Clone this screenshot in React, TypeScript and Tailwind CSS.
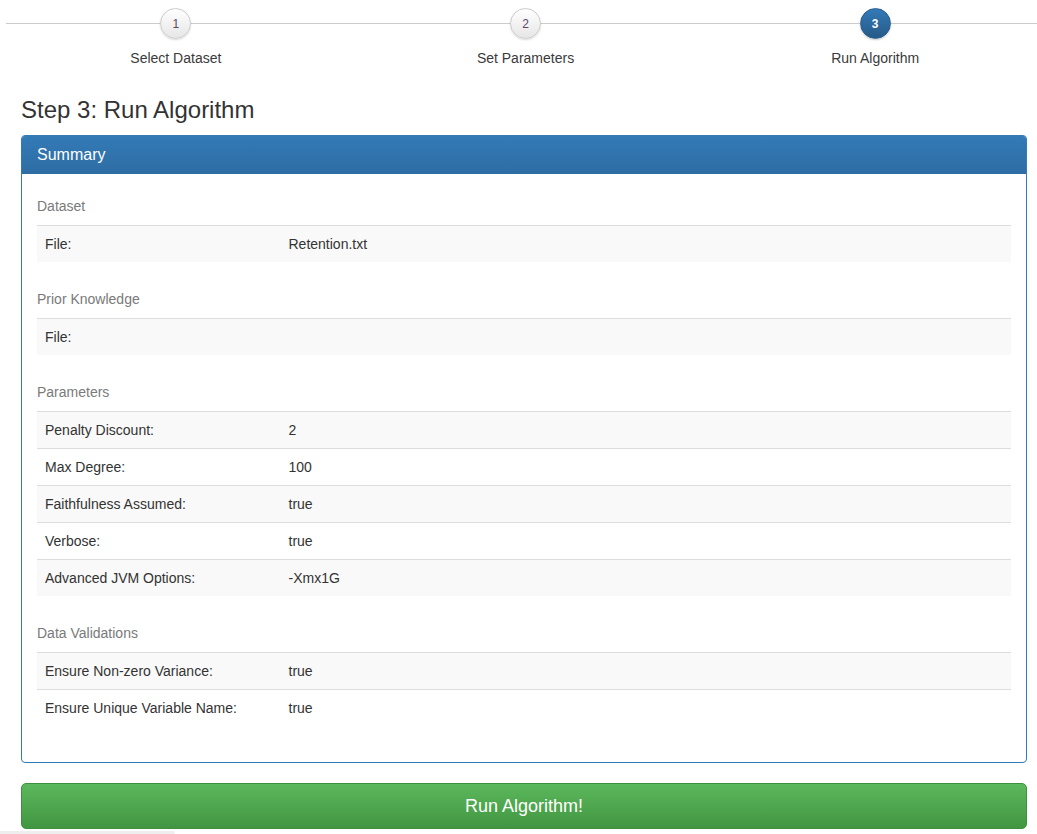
type Row = { label: string; value: string };

const sections: { title: string; rows: Row[] }[] = [
  { title: "Dataset", rows: [{ label: "File:", value: "Retention.txt" }] },
  { title: "Prior Knowledge", rows: [{ label: "File:", value: "" }] },
  {
    title: "Parameters",
    rows: [
      { label: "Penalty Discount:", value: "2" },
      { label: "Max Degree:", value: "100" },
      { label: "Faithfulness Assumed:", value: "true" },
      { label: "Verbose:", value: "true" },
      { label: "Advanced JVM Options:", value: "-Xmx1G" },
    ],
  },
  {
    title: "Data Validations",
    rows: [
      { label: "Ensure Non-zero Variance:", value: "true" },
      { label: "Ensure Unique Variable Name:", value: "true" },
    ],
  },
];

const steps = ["Select Dataset", "Set Parameters", "Run Algorithm"];

function Stepper() {
  return (
    <div className="relative h-[77px] overflow-hidden">
      <div className="absolute left-[6px] right-0 top-[23px] border-t border-[#cccccc]" />
      <div className="relative flex w-[1050px] pl-px">
        {steps.map((s, i) => {
          const active = i === 2;
          return (
            <div key={s} className="flex w-[350px] flex-col items-center pt-[8px]">
              {active ? (
                <div className="flex h-[31px] w-[31px] items-center justify-center rounded-full border border-[#285e8e] bg-gradient-to-b from-[#337ab7] to-[#265a88] text-[12px] font-bold text-white shadow-[0_1px_2px_rgba(0,0,0,0.2)]">
                  {i + 1}
                </div>
              ) : (
                <div className="flex h-[31px] w-[31px] items-center justify-center rounded-full border border-[#cccccc] bg-gradient-to-b from-white to-[#e6e6e6] text-[12px] text-[#5a4a66] shadow-[0_1px_2px_rgba(0,0,0,0.15)]">
                  {i + 1}
                </div>
              )}
              <div className="mt-[9px] text-[14px] leading-5 text-[#3a3a3a]">{s}</div>
            </div>
          );
        })}
      </div>
    </div>
  );
}

export default function App() {
  return (
    <div className="min-h-screen bg-white font-['Liberation_Sans',Arial,sans-serif] text-[#333]">
      <Stepper />

      <div className="px-[21px] pr-[10px]">
        <h1 className="mt-[20px] text-[24px] leading-[26px]">Step 3: Run Algorithm</h1>

        <div className="mt-[12px] overflow-hidden rounded-[4px] border border-[#337ab7]">
          <div className="bg-gradient-to-b from-[#337ab7] to-[#2e6da4] px-[15px] py-[10px] text-[16px] leading-[18px] text-white">
            Summary
          </div>

          <div className="px-[15px] pt-[22px] pb-[36px]">
            {sections.map((sec, si) => (
              <div key={sec.title} className={si > 0 ? "mt-[27px]" : ""}>
                <div className="mb-[9px] text-[14px] leading-5 text-[#7a7a7a]">{sec.title}</div>
                <div className="text-[14px]">
                  {sec.rows.map((r, ri) => (
                    <div
                      key={r.label}
                      className={
                        "flex border-t border-[#dddddd] " +
                        (ri % 2 === 0 ? "bg-[#f9f9f9]" : "bg-white")
                      }
                    >
                      <div className="w-1/4 px-2 py-2 leading-5">{r.label}</div>
                      <div className="flex-1 px-2 py-2 leading-5">{r.value}</div>
                    </div>
                  ))}
                </div>
              </div>
            ))}
          </div>
        </div>

        <button className="mt-[20px] flex h-[46px] w-full items-center justify-center rounded-[5px] border border-[#3e8f3e] bg-gradient-to-b from-[#5cb85c] to-[#419641] text-[18px] text-white">
          Run Algorithm!
        </button>
      </div>

      <div className="mt-[2px] h-[3px] w-[175px] rounded-r bg-[#eeeeee]" />
    </div>
  );
}
